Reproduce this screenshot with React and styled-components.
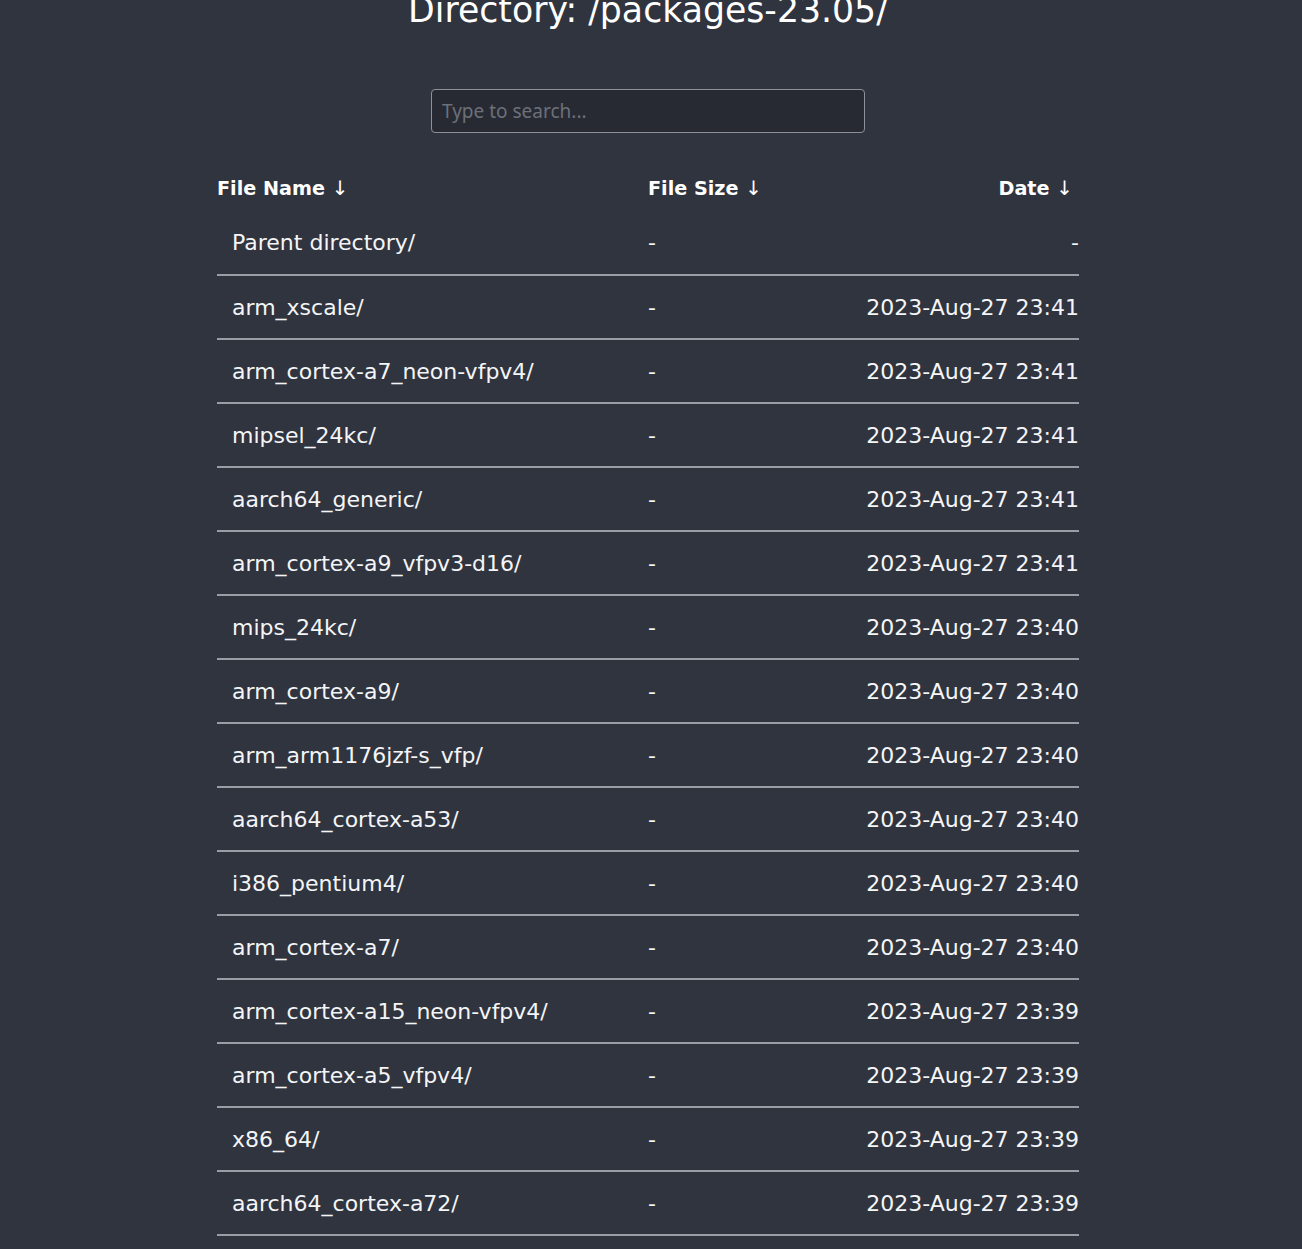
import React from "react";
import styled, { createGlobalStyle } from "styled-components";

const GlobalStyle = createGlobalStyle`
  html, body {
    margin: 0;
    padding: 0;
    background: #30343f;
  }
  body {
    padding-right: 6px;
    color: #ffffff;
    font-family: "DejaVu Sans", Verdana, sans-serif;
    overflow: hidden;
  }
`;

const Main = styled.main`
  width: 862px;
  margin: -12px auto 0;
  display: flex;
  flex-direction: column;
  align-items: center;
`;

const Title = styled.h1`
  margin: 0;
  font-size: 34.7px;
  line-height: 44px;
  font-weight: 400;
  color: #ffffff;
  text-align: center;
`;

const Search = styled.input`
  box-sizing: border-box;
  width: 434px;
  height: 44px;
  margin-top: 57px;
  padding: 0 10px;
  background: #272a33;
  border: 1px solid #8d9099;
  border-radius: 4px;
  color: #ffffff;
  font-family: "Noto Sans", sans-serif;
  font-size: 19px;
  outline: none;

  &::placeholder {
    color: #6c7079;
  }
`;

const Table = styled.table`
  width: 100%;
  margin-top: 31px;
  border-collapse: collapse;
`;

const Head = styled.th`
  height: 47px;
  padding: 0 ${(p) => (p.$right ? "6px" : "0")} 0 0;
  text-align: ${(p) => (p.$right ? "right" : "left")};
  width: ${(p) => p.$width || "auto"};
  font-family: "DejaVu Sans", Verdana, sans-serif;
  font-weight: 700;
  font-size: 19.2px;
  color: #ffffff;
  white-space: pre;
`;

const Arrow = styled.span`
  font-weight: 400;
  font-size: 20px;
`;

const Row = styled.tr`
  height: 64px;
  border-bottom: 2px solid #9b9da4;
`;

const Cell = styled.td`
  padding: 0 0 0 ${(p) => (p.$pad ? "15px" : "0")};
  text-align: ${(p) => (p.$right ? "right" : "left")};
  font-size: 22px;
  color: #f4f5f7;
  white-space: nowrap;
`;

const entries = [
  ["Parent directory/", "-", "-"],
  ["arm_xscale/", "-", "2023-Aug-27 23:41"],
  ["arm_cortex-a7_neon-vfpv4/", "-", "2023-Aug-27 23:41"],
  ["mipsel_24kc/", "-", "2023-Aug-27 23:41"],
  ["aarch64_generic/", "-", "2023-Aug-27 23:41"],
  ["arm_cortex-a9_vfpv3-d16/", "-", "2023-Aug-27 23:41"],
  ["mips_24kc/", "-", "2023-Aug-27 23:40"],
  ["arm_cortex-a9/", "-", "2023-Aug-27 23:40"],
  ["arm_arm1176jzf-s_vfp/", "-", "2023-Aug-27 23:40"],
  ["aarch64_cortex-a53/", "-", "2023-Aug-27 23:40"],
  ["i386_pentium4/", "-", "2023-Aug-27 23:40"],
  ["arm_cortex-a7/", "-", "2023-Aug-27 23:40"],
  ["arm_cortex-a15_neon-vfpv4/", "-", "2023-Aug-27 23:39"],
  ["arm_cortex-a5_vfpv4/", "-", "2023-Aug-27 23:39"],
  ["x86_64/", "-", "2023-Aug-27 23:39"],
  ["aarch64_cortex-a72/", "-", "2023-Aug-27 23:39"],
  ["mipsel_74kc/", "-", "2023-Aug-27 23:39"],
];

export default function App() {
  return (
    <>
      <GlobalStyle />
      <Main>
        <Title>Directory: /packages-23.05/</Title>
        <Search placeholder="Type to search..." />
        <Table>
          <thead>
            <tr>
              <Head $width="50%">File Name <Arrow>↓</Arrow></Head>
              <Head>File Size <Arrow>↓</Arrow></Head>
              <Head $right>Date <Arrow>↓</Arrow></Head>
            </tr>
          </thead>
          <tbody>
            {entries.map(([name, size, date]) => (
              <Row key={name}>
                <Cell $pad>{name}</Cell>
                <Cell>{size}</Cell>
                <Cell $right>{date}</Cell>
              </Row>
            ))}
          </tbody>
        </Table>
      </Main>
    </>
  );
}
